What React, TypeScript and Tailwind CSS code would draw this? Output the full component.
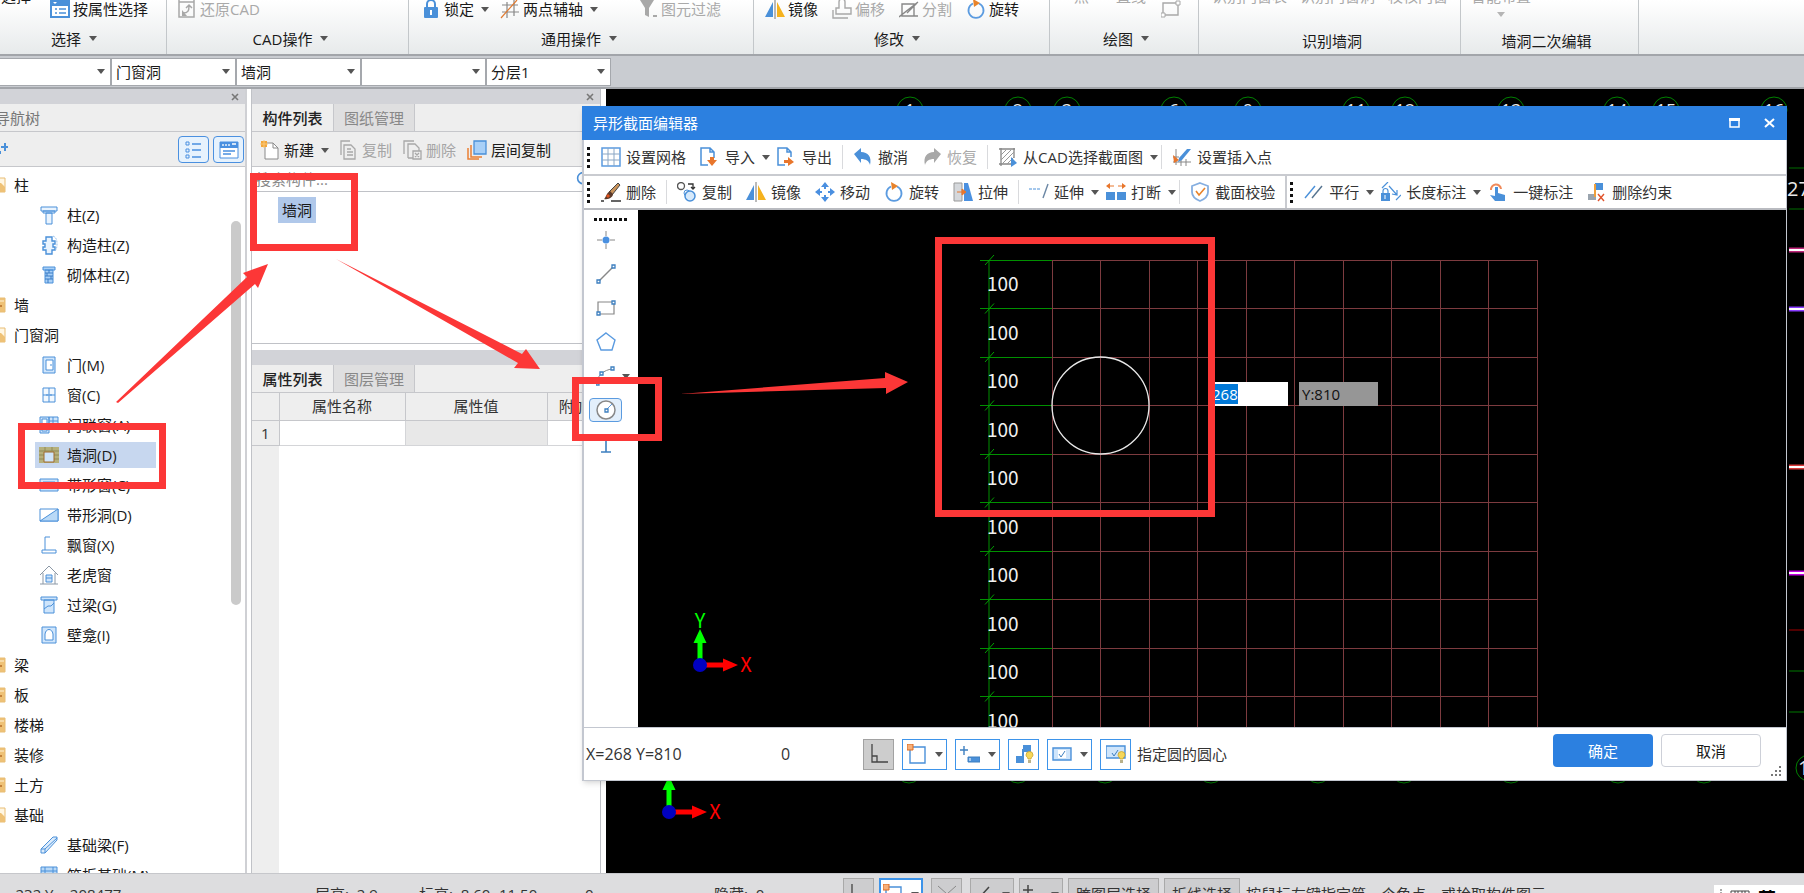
import React, { useEffect, useRef } from "react";
import clsx from "clsx";

const BLUE = "#4a90d9";
const GRAY = "#a8a8a8";

type SvgProps = { children: React.ReactNode; size?: number };

const Svg: React.FC<SvgProps> = ({ children, size = 20 }) => (
  <svg width={size} height={size} viewBox="0 0 20 20" fill="none" className="shrink-0" aria-hidden="true">
    {children}
  </svg>
);

const Caret = ({ className = "text-[#555]" }: { className?: string }) => (
  <svg width="8" height="5" viewBox="0 0 8 5" className={clsx("shrink-0", className)} aria-hidden="true">
    <path d="M0 0h8L4 5z" fill="currentColor" />
  </svg>
);

/* ---------- icons ---------- */

const icons = {
  propSelect: (
    <Svg>
      <path d="M0 1h20v18H0z" fill={BLUE} />
      <path d="M2 7h16v10H2z" fill="#fff" />
      <path d="M3 3h4L5 5z" fill="#fff" />
      <path d="M5 10h2M9 10h7M5 14h2M9 14h7" stroke={BLUE} strokeWidth="1.5" />
    </Svg>
  ),
  restore: (
    <Svg>
      <path d="M2 1v17h15V1M6 14c5 0 6-2 6-7M9 9l3-3 3 3M2 3h15" stroke={GRAY} strokeWidth="1.5" />
      <path d="M5 11v6h5z" fill={GRAY} />
    </Svg>
  ),
  lock: (
    <Svg>
      <path d="M6 8V5a4 4 0 018 0v3" stroke={BLUE} strokeWidth="2" />
      <rect x="3" y="8" width="14" height="11" rx="1" fill={BLUE} />
      <path d="M10 11v5" stroke="#fff" strokeWidth="2" />
    </Svg>
  ),
  axis: (
    <Svg>
      <path d="M7 3v16M14 1v16M2 6h16M2 13h17" stroke="#888" strokeWidth="1.2" />
      <path d="M1 19L17 1" stroke="#e07a30" strokeWidth="1.2" />
    </Svg>
  ),
  filter: (
    <Svg>
      <path d="M2 1h14l-5 8v9l-4-2V9z" fill={GRAY} />
      <path d="M15 17h4" stroke={GRAY} strokeWidth="2" />
    </Svg>
  ),
  mirror: (
    <Svg>
      <path d="M8 3v15H0z" fill={BLUE} />
      <path d="M12 3v15h8z" fill="#f5b21e" />
      <path d="M10 0v20" stroke="#777" />
    </Svg>
  ),
  offset: (
    <Svg>
      <path d="M7 9V3a3 3 0 016 0v6h6v6H4V9zM1 11v8h15" stroke={GRAY} strokeWidth="1.4" />
    </Svg>
  ),
  split: (
    <Svg>
      <path d="M3 5h12v12H3zM0 18L19 3M8 14l10-10M13 17h6" stroke="#888" strokeWidth="1.4" />
    </Svg>
  ),
  rotate: (
    <Svg>
      <path d="M13 4.5a7.500 7.500 0 11-6 0" stroke="#5b9be0" strokeWidth="1.8" />
      <path d="M7 0l7 4-6 4z" fill="#e8832a" />
    </Svg>
  ),
  rectGray: (
    <Svg>
      <path d="M2 4h15v12H2z" stroke={GRAY} strokeWidth="1.4" />
      <path d="M0 14h4v4H0zM15 2h4v4h-4z" fill="#fff" stroke={GRAY} />
    </Svg>
  ),
  newDoc: (
    <Svg>
      <path d="M5 3h8l5 5v11H5z" fill="#fff" stroke="#8a8a8a" />
      <path d="M13 3v5h5" stroke="#8a8a8a" />
      <path d="M1 1h6v6H1z" fill="#f3a73b" />
      <path d="M4 0v8M0 4h8" stroke="#f9c87a" />
    </Svg>
  ),
  copyGray: (
    <Svg>
      <path d="M6 5h7l4 4v10H6z" stroke={GRAY} strokeWidth="1.3" />
      <path d="M3 15V1h9M9 9h4M9 12h6M9 15h6" stroke={GRAY} strokeWidth="1.3" />
    </Svg>
  ),
  deleteGray: (
    <Svg>
      <path d="M2 14V1h10M6 18V4h7l4 4v3M6 18h5" stroke={GRAY} strokeWidth="1.3" />
      <path d="M11 11h8v8h-8zM13 13l4 4M17 13l-4 4" stroke={GRAY} strokeWidth="1.3" />
    </Svg>
  ),
  layerCopy: (
    <Svg>
      <path d="M7 1h12v13H7z" fill="#a9d0f7" stroke={BLUE} strokeWidth="1.3" />
      <path d="M4 5v12h11M1 8v11h11" stroke="#ea8034" strokeWidth="1.5" />
    </Svg>
  ),
  grid: (
    <Svg>
      <path d="M1 1h18v18H1z" stroke="#5b9be0" strokeWidth="1.5" />
      <path d="M7 1v18M13 1v18M1 7h18M1 13h18" stroke="#8aa6c4" />
    </Svg>
  ),
  importDoc: (
    <Svg>
      <path d="M8 18H1V1h9l4 4v6M10 1v4h4" stroke={BLUE} strokeWidth="1.5" />
      <path d="M10 10h4v3h3l-5 6-5-6h3z" fill="#e8762c" />
    </Svg>
  ),
  exportDoc: (
    <Svg>
      <path d="M8 18H1V1h9l4 4v5M10 1v4h4" stroke={BLUE} strokeWidth="1.5" />
      <path d="M7 13h4v-3l6 5-6 4v-3H7z" fill="#e8762c" />
    </Svg>
  ),
  undo: (
    <Svg>
      <path d="M1 7l7-6v4c7 0 11 5 9 13-1-4-4-6-9-6v4z" fill={BLUE} />
    </Svg>
  ),
  redo: (
    <Svg>
      <path d="M19 7l-7-6v4C5 5 1 10 3 18c1-4 4-6 9-6v4z" fill={GRAY} />
    </Svg>
  ),
  cadSelect: (
    <Svg>
      <path d="M1 2h16M1 17h12M3 1v18M16 1v10" stroke="#888" strokeWidth="1.3" />
      <path d="M3 8l5-5M3 13L13 3M4 17L16 5M9 17l7-7" stroke="#999" />
      <path d="M13 10l6 6-6 4z" fill={BLUE} />
    </Svg>
  ),
  insertPoint: (
    <Svg>
      <path d="M4 2v16M1 15h18M9 12v7M14 12v7M1 10h6" stroke="#888" />
      <path d="M19 2l-9 11-4 2 1-4 8-9z" fill={BLUE} />
      <path d="M1 8l6 5-5 3z" fill="#e8762c" />
    </Svg>
  ),
  brush: (
    <Svg>
      <path d="M17 1l2 2-8 10-3-3z" fill="#c8925a" stroke="#444" />
      <path d="M9 9l3 3c0 3-4 6-9 5 2-1 2-6 6-8z" fill="#5b3a2a" />
      <path d="M6 13l2 2" stroke="#e0531f" strokeWidth="3" />
      <path d="M0 19h3M10 19h10" stroke="#333" strokeWidth="1.5" />
    </Svg>
  ),
  copy: (
    <Svg>
      <circle cx="4" cy="4" r="3.500" stroke="#555" strokeWidth="1.3" />
      <path d="M11 2h5v5M14 5l2 2 2-2" stroke="#333" strokeWidth="1.3" />
      <circle cx="10" cy="11" r="3" fill="#fff" stroke={BLUE} />
      <circle cx="13" cy="14" r="5" fill="#d6e9fb" stroke={BLUE} strokeWidth="1.5" />
    </Svg>
  ),
  move: (
    <Svg>
      <path d="M10 0l4 5H6zM10 20l4-5H6zM0 10l5-4v8zM20 10l-5-4v8z" fill="#4a8fe0" />
      <path d="M10 4v3M10 13v3M4 10h3M13 10h3" stroke="#4a8fe0" strokeWidth="2" />
    </Svg>
  ),
  stretch: (
    <Svg>
      <path d="M1 1h8v18H1z" fill="#d5d8dc" stroke="#999" />
      <path d="M11 1h4l5 18h-9z" fill="#4a90e0" />
      <path d="M4 10h6M9 7l4 3-4 3z" stroke="#e8762c" fill="#e8762c" />
    </Svg>
  ),
  extend: (
    <Svg>
      <path d="M0 7h12" stroke={BLUE} strokeDasharray="3 1" />
      <path d="M19 2l-5 14" stroke="#6a86a4" strokeWidth="1.4" />
    </Svg>
  ),
  breakAt: (
    <Svg>
      <path d="M0 10h9v8H0zM11 10h9v8h-9z" fill={BLUE} />
      <path d="M2 4h6M12 4h6" stroke="#e8762c" />
      <path d="M0 4l4-3v6zM20 4l-4-3v6z" fill="#e8762c" />
    </Svg>
  ),
  shield: (
    <Svg>
      <path d="M10 1l8 3v6c0 4-3 7-8 9-5-2-8-5-8-9V4z" stroke="#85aee0" strokeWidth="1.8" />
      <path d="M6 9l3 4 6-7" stroke="#e8832a" strokeWidth="1.6" />
    </Svg>
  ),
  parallel: (
    <Svg>
      <path d="M1 16L11 4" stroke={BLUE} strokeWidth="1.4" />
      <path d="M8 16L18 4" stroke="#55738f" strokeWidth="1.4" />
    </Svg>
  ),
  length: (
    <Svg>
      <path d="M0 11h9v8H0z" fill={BLUE} />
      <path d="M2 11V9a2.500 2.500 0 015 0v2M1 6l6-6M8 4l8 9M15 18l5-5M11 12l5 1V8" stroke={BLUE} strokeWidth="1.2" />
      <path d="M4 13v4" stroke="#fff" />
    </Svg>
  ),
  tap: (
    <Svg>
      <path d="M3 8a5 5 0 1110-1" stroke="#f08a5a" strokeWidth="2" />
      <path d="M7 5h3v6l7 2v6H7l-5-6 5 1z" fill={BLUE} />
    </Svg>
  ),
  unconstrain: (
    <Svg>
      <path d="M8 1h8v7H8z" fill={BLUE} />
      <path d="M1 12h8v6H1z" fill="#9aa4ae" />
      <path d="M8 2v13" stroke="#f0a03c" strokeWidth="2" />
      <path d="M11 12l6 7M17 12l-6 7" stroke="#e0532c" strokeWidth="1.4" />
    </Svg>
  ),
};

const treeIcons = {
  column: (
    <Svg>
      <path d="M2 2h16v4H2zM4 6h12v2H4zM7 8h6v11H7z" fill="#eaf4fe" stroke={BLUE} />
    </Svg>
  ),
  structColumn: (
    <Svg>
      <path d="M7 2h6v4h3v3h-2v3h2v3h-3v4H7v-4H4v-3h2V9H4V6h3z" fill="#eaf4fe" stroke={BLUE} strokeWidth="1.4" />
      <path d="M14 1c3 1 4 4 4 7s0 6-2 8" stroke="#9cc3ec" strokeDasharray="2 1" />
    </Svg>
  ),
  brickColumn: (
    <Svg>
      <path d="M4 2h12v3H4zM6 5h8v13H6z" fill="#a9d0f7" stroke={BLUE} />
      <path d="M6 8h8M6 11h8M6 14h8M10 5v3M8 8v3M12 11v3M9 14v4" stroke="#3a7cc6" />
    </Svg>
  ),
  door: (
    <Svg>
      <path d="M4 2h12v16H4z" fill="#cfe5fb" stroke={BLUE} />
      <path d="M7 5h7v10H7z" fill="#fff" stroke={BLUE} />
      <path d="M12 9v2" stroke={BLUE} />
    </Svg>
  ),
  window: (
    <Svg>
      <path d="M4 3h12v14H4zM10 3v14M4 10h12" fill="#f2f8fe" stroke={BLUE} />
      <path d="M8 9v2M12 9v2" stroke={BLUE} />
    </Svg>
  ),
  doorWindow: (
    <Svg>
      <path d="M1 2h9v16H1zM10 2h9v8h-9zM14 2v8M10 6h9" fill="#cfe5fb" stroke={BLUE} />
      <path d="M3 4h5v12H3z" fill="#fff" stroke={BLUE} />
    </Svg>
  ),
  wallHole: (
    <Svg>
      <path d="M0 2h20v16H0z" fill="#b5b07c" />
      <path d="M0 6h20M0 10h5M15 10h5M0 14h5M15 14h5M6 2v4M13 2v4" stroke="#8f8a58" />
      <path d="M5 7h10v10H5z" fill="#cfe5fb" stroke="#a06a2c" />
    </Svg>
  ),
  stripWindow: (
    <Svg>
      <path d="M1 4h18v12H1z" fill="#cfe5fb" stroke={BLUE} />
      <path d="M4 7h12v6H4z" fill="#fff" stroke={BLUE} />
    </Svg>
  ),
  stripHole: (
    <Svg>
      <path d="M1 4h18v12H1z" fill="#fff" stroke={BLUE} />
      <path d="M1 16L19 4v12z" fill="#b9d9f7" stroke={BLUE} />
    </Svg>
  ),
  bay: (
    <Svg>
      <path d="M11 2H6v13h11v3H3v-3h3" stroke={BLUE} />
    </Svg>
  ),
  dormer: (
    <Svg>
      <path d="M1 10l9-9 9 9M4 8v11M16 8v11M1 19h18" stroke="#8b98a6" />
      <path d="M7 10h6v7H7zM7 13h6" fill="#cfe5fb" stroke={BLUE} />
    </Svg>
  ),
  lintel: (
    <Svg>
      <path d="M2 2h16v3H2zM5 5h10v13H5z" fill="#cfe5fb" stroke={BLUE} />
      <path d="M5 14l4-3h3l3-3" stroke={BLUE} />
    </Svg>
  ),
  niche: (
    <Svg>
      <path d="M3 2h14v16H3z" fill="#cfe5fb" stroke={BLUE} />
      <path d="M6 15V9c1-6 7-6 8 0v6z" fill="#fff" stroke={BLUE} />
    </Svg>
  ),
  beam: (
    <Svg>
      <path d="M2 14L14 2h4v3L6 18H2zM2 14h4v4M6 14L18 3" fill="#dcecfc" stroke={BLUE} />
    </Svg>
  ),
  raft: (
    <Svg>
      <path d="M2 2h16v16H2z" fill="#b9d9f7" stroke={BLUE} />
      <path d="M6 2v16M14 2v16M2 6h16M2 12h16" stroke={BLUE} />
    </Svg>
  ),
};

/* ---------- ribbon ---------- */

type RibbonItemProps = { icon: React.ReactNode; label: string; caret?: boolean; disabled?: boolean };

const RibbonItem: React.FC<RibbonItemProps> = ({ icon, label, caret, disabled }) => (
  <button
    disabled={disabled}
    className={clsx("flex h-6 items-center gap-[3px] whitespace-nowrap", disabled ? "text-[#a9a9a9]" : "text-[#1a1a1a]")}
  >
    {icon}
    <span>{label}</span>
    {caret && <span className="ml-1 flex"><Caret /></span>}
  </button>
);

const BigItem = ({ label, caret, active }: { label: string; caret?: boolean; active?: boolean }) => (
  <button className={clsx("flex h-[35px] flex-col items-center whitespace-nowrap leading-5", active ? "text-[#1a1a1a]" : "text-[#a9a9a9]")}>
    <span>{label}</span>
    {caret && <span className="mt-[6px]"><Caret className="text-[#b5b5b5]" /></span>}
  </button>
);

type RibbonGroupProps = { title: string; caret?: boolean; className: string; children: React.ReactNode };

const RibbonGroup: React.FC<RibbonGroupProps> = ({ title, caret, className, children }) => (
  <div className={clsx("flex shrink-0 flex-col justify-end border-r border-[#c3c7ca]", className)}>
    <div className="flex shrink-0 items-end">{children}</div>
    <div
      className={clsx(
        "flex h-[33px] shrink-0 items-center justify-center gap-2 text-[#1a1a1a]",
        caret ? "pt-[2px]" : "pt-[6px]",
      )}
    >
      {title}
      {caret && <Caret />}
    </div>
  </div>
);

const Ribbon = () => (
  <header className="flex h-[56px] shrink-0 overflow-hidden border-b-2 border-[#a2a5aa] bg-linear-to-b from-white to-[#e7eaeb]">
    <RibbonGroup title="选择" caret className="w-[167px] pr-[18px]">
      <div className="flex items-end gap-[19px] pl-px">
        <BigItem label="选择" active />
        <RibbonItem icon={icons.propSelect} label="按属性选择" />
      </div>
    </RibbonGroup>
    <RibbonGroup title="CAD操作" caret className="w-[242px] pr-1 pl-[10px]">
      <RibbonItem icon={icons.restore} label="还原CAD" disabled />
    </RibbonGroup>
    <RibbonGroup title="通用操作" caret className="w-[345px] pr-4 pl-[12px]">
      <div className="flex gap-[11px]">
        <RibbonItem icon={icons.lock} label="锁定" caret />
        <RibbonItem icon={icons.axis} label="两点辅轴" caret />
        <div className="pl-[29px]">
          <RibbonItem icon={icons.filter} label="图元过滤" disabled />
        </div>
      </div>
    </RibbonGroup>
    <RibbonGroup title="修改" caret className="w-[296px] pr-5 pl-[11px]">
      <div className="flex gap-[14px]">
        <RibbonItem icon={icons.mirror} label="镜像" />
        <RibbonItem icon={icons.offset} label="偏移" disabled />
        <RibbonItem icon={icons.split} label="分割" disabled />
        <RibbonItem icon={icons.rotate} label="旋转" />
      </div>
    </RibbonGroup>
    <RibbonGroup title="绘图" caret className="w-[149px] pr-3 pl-[16px]">
      <div className="flex items-end gap-[15px] pl-2">
        <div className="pr-3"><BigItem label="点" /></div>
        <BigItem label="直线" />
        <RibbonItem icon={icons.rectGray} label="" />
      </div>
    </RibbonGroup>
    <RibbonGroup title="识别墙洞" className="w-[262px] pr-2 pl-[13px]">
      <div className="flex gap-[13px]">
        <BigItem label="识别门窗表" />
        <BigItem label="识别门窗洞" />
        <BigItem label="校核门窗" />
      </div>
    </RibbonGroup>
    <RibbonGroup title="墙洞二次编辑" className="w-[178px] pr-4 pl-[10px]">
      <BigItem label="智能布置" caret />
    </RibbonGroup>
  </header>
);

const filters = [
  { label: "楼层", value: "" },
  { label: "构件分类", value: "门窗洞" },
  { label: "构件类型", value: "墙洞" },
  { label: "构件", value: "" },
  { label: "分层", value: "分层1" },
];

const FilterBar = () => (
  <div className="flex h-[33px] shrink-0 items-center border-b-2 border-[#a2a5aa] bg-[#c9ccd1]">
    <div className="-ml-[14px] flex">
      {filters.map((f) => (
        <label key={f.label} className="relative flex h-[28px] w-[125px] items-center border border-[#a5a8ad] bg-white">
          <select aria-label={f.label} className="h-full w-full appearance-none bg-transparent pl-1 text-[#1a1a1a]">
            <option>{f.value}</option>
          </select>
          <span className="pointer-events-none absolute right-[5px]"><Caret /></span>
        </label>
      ))}
    </div>
  </div>
);

/* ---------- navigation tree ---------- */

type TreeGroup = { name: string; open?: boolean; children?: { name: string; icon: keyof typeof treeIcons }[] };

const tree: TreeGroup[] = [
  {
    name: "柱",
    open: true,
    children: [
      { name: "柱(Z)", icon: "column" },
      { name: "构造柱(Z)", icon: "structColumn" },
      { name: "砌体柱(Z)", icon: "brickColumn" },
    ],
  },
  { name: "墙" },
  {
    name: "门窗洞",
    open: true,
    children: [
      { name: "门(M)", icon: "door" },
      { name: "窗(C)", icon: "window" },
      { name: "门联窗(A)", icon: "doorWindow" },
      { name: "墙洞(D)", icon: "wallHole" },
      { name: "带形窗(C)", icon: "stripWindow" },
      { name: "带形洞(D)", icon: "stripHole" },
      { name: "飘窗(X)", icon: "bay" },
      { name: "老虎窗", icon: "dormer" },
      { name: "过梁(G)", icon: "lintel" },
      { name: "壁龛(I)", icon: "niche" },
    ],
  },
  { name: "梁" },
  { name: "板" },
  { name: "楼梯" },
  { name: "装修" },
  { name: "土方" },
  {
    name: "基础",
    open: true,
    children: [
      { name: "基础梁(F)", icon: "beam" },
      { name: "筏板基础(M)", icon: "raft" },
    ],
  },
];

const Folder = ({ open }: { open?: boolean }) => (
  <svg width="18" height="18" viewBox="0 0 18 18" className="shrink-0" aria-hidden="true">
    <path d="M1 4h6l2-2h8v14H1z" fill={open ? "#fff6e2" : "#eec176"} stroke="#e8bd74" />
    {open ? <path d="M1 16V7h12l4 4v5z" fill="#eec176" /> : <path d="M2 5h14" stroke="#fff3d6" />}
    {!open && <path d="M11 10h3" stroke="#c2803a" strokeWidth="2" />}
  </svg>
);

const PanelBar = ({ closable = true, className }: { closable?: boolean; className?: string }) => (
  <div className={clsx("flex h-[15px] shrink-0 items-center justify-end bg-[#d2d3d8] pr-[6px]", className)}>
    {closable && (
      <button aria-label="关闭" className="flex">
        <svg width="8" height="8" viewBox="0 0 8 8" aria-hidden="true">
          <path d="M1 1l6 6M7 1L1 7" stroke="#777" strokeWidth="1.6" />
        </svg>
      </button>
    )}
  </div>
);

const NavPanel = () => (
  <aside className="flex w-[247px] shrink-0 justify-end overflow-hidden border-r-2 border-[#cfd0d4] bg-white">
    <div className="relative flex w-[265px] shrink-0 flex-col">
      <PanelBar />
      <h2 className="flex h-[28px] shrink-0 items-center border-b border-[#c6c7cb] bg-[#eee] pl-[15px] text-[#777]">导航树</h2>
      <div className="flex h-[35px] shrink-0 items-center gap-1 border-b border-[#c6c7cb] bg-[#eee] pt-px pr-px pl-2">
        <button aria-label="添加" className="mr-auto">
          <Svg>
            <path d="M1 15l8-8M17 3v8M13 7h8" stroke={BLUE} strokeWidth="2" />
            <path d="M10 11h3v3h-3z" fill={BLUE} />
          </Svg>
        </button>
        <button aria-label="列表视图" className="flex h-[27px] w-[31px] items-center justify-center rounded border border-[#4a90e0] bg-[#e6f2fd]">
          <Svg>
            <path d="M2 2h3v3H2zM2 9h3v3H2zM2 15h3v3H2z" stroke="#4a90e0" />
            <path d="M8 4h9M8 10h9M8 17h9" stroke="#4a90e0" strokeWidth="1.4" />
          </Svg>
        </button>
        <button aria-label="分组视图" className="flex h-[27px] w-[31px] items-center justify-center rounded border border-[#4a90e0] bg-[#e6f2fd]">
          <Svg>
            <path d="M1 2h18v16H1z" fill="#fff" stroke="#4a90e0" />
            <path d="M1 2h18v6H1z" fill="#4a90e0" />
            <path d="M4 4v2M7 4v2M10 4v2M13 4h4" stroke="#fff" strokeWidth="1.3" />
            <path d="M4 11h12M4 14h8" stroke="#4a90e0" strokeWidth="1.4" />
          </Svg>
        </button>
      </div>
      <ul className="min-h-0 flex-1 overflow-hidden pt-[3px] text-[#1a1a1a]">
        {tree.map((group) => (
          <li key={group.name}>
            <button className="flex h-[30px] items-center gap-[8px] pl-2">
              <Folder open={group.open} />
              {group.name}
            </button>
            {group.children && (
              <ul>
                {group.children.map((item) => (
                  <li key={item.name} className="flex h-[30px] items-center pl-[55px]">
                    <button
                      className={clsx(
                        "flex h-[26px] w-[121px] items-center gap-[8px] pl-1 whitespace-nowrap",
                        item.name === "墙洞(D)" && "bg-[#c7d7ef]",
                      )}
                    >
                      {treeIcons[item.icon]}
                      {item.name}
                    </button>
                  </li>
                ))}
              </ul>
            )}
          </li>
        ))}
      </ul>
      <div className="absolute top-[132px] right-1 h-[384px] w-[10px] rounded-full bg-[#cacaca]" />
    </div>
  </aside>
);

/* ---------- component and property lists ---------- */

const Tabs = ({ names }: { names: [string, string] }) => (
  <div className="flex h-[28px] shrink-0 border-b border-[#c6c7cb] bg-[#eee]" role="tablist">
    <button role="tab" aria-selected="true" className="w-[81px] font-medium text-[#222]">
      {names[0]}
    </button>
    <button role="tab" aria-selected="false" className="w-[82px] border-x border-[#c6c7cb] bg-[#dfdfe0] text-[#888]">
      {names[1]}
    </button>
  </div>
);

const ListPanel = () => (
  <section className="mr-[5px] ml-[4px] flex w-[350px] shrink-0 flex-col border-x border-[#c0c2c7] bg-white">
    <PanelBar />
    <Tabs names={["构件列表", "图纸管理"]} />
    <div className="flex h-[35px] shrink-0 items-center border-b border-[#c6c7cb] bg-[#eee] pt-[2px] pl-[8px] whitespace-nowrap">
      <button className="mr-[9px] flex items-center gap-[4px] text-[#1a1a1a]">
        {icons.newDoc}
        新建
        <span className="ml-[3px]"><Caret /></span>
      </button>
      <button disabled className="mr-[10px] flex items-center gap-[4px] text-[#a5a5a5]">
        {icons.copyGray}
        复制
      </button>
      <button disabled className="mr-[11px] flex items-center gap-[4px] text-[#a5a5a5]">
        {icons.deleteGray}
        删除
      </button>
      <button className="flex items-center gap-[4px] text-[#1a1a1a]">
        {icons.layerCopy}
        层间复制
      </button>
    </div>
    <div className="flex h-[25px] shrink-0 items-center border-b border-[#c0c2c7] pr-[8px] pl-1">
      <input aria-label="搜索构件" placeholder="搜索构件..." className="min-w-0 flex-1 outline-none placeholder:text-[#888]" />
      <Svg size={16}>
        <circle cx="9" cy="9" r="7" stroke={BLUE} strokeWidth="2" />
        <path d="M14 14l5 5" stroke={BLUE} strokeWidth="2" />
      </Svg>
    </div>
    <ul className="h-[152px] shrink-0 border-b border-[#c0c2c7] pt-[5px] pl-[26px]">
      <li className="flex">
        <button className="h-[26px] w-[38px] bg-[#b0c8ea] text-[#1a1a1a]">墙洞</button>
      </li>
    </ul>
    <PanelBar closable={false} className="mt-[6px]" />
    <Tabs names={["属性列表", "图层管理"]} />
    <table className="w-full table-fixed border-collapse text-center text-[#333]">
      <thead>
        <tr className="h-[27px] bg-[#eee]">
          <th className="w-[27px] border-r border-b border-[#c6c7cb]" />
          <th className="w-[126px] border-r border-b border-[#c6c7cb] p-0 font-normal">属性名称</th>
          <th className="w-[142px] border-r border-b border-[#c6c7cb] p-0 font-normal">属性值</th>
          <th className="border-b border-[#c6c7cb] p-0 font-normal">附加</th>
        </tr>
      </thead>
      <tbody>
        <tr className="h-[25px]">
          <td className="border-r border-b border-[#c6c7cb] bg-[#eee] p-0">1</td>
          <td className="border-r border-b border-[#d4d5d8]" />
          <td className="border-r border-b border-[#d4d5d8] bg-[#e8e8e8]" />
          <td className="border-b border-[#d4d5d8]" />
        </tr>
      </tbody>
    </table>
    <div className="w-[27px] flex-1 bg-[#eee]" />
  </section>
);

/* ---------- drawing area ---------- */

const AxisMark = ({ x, y, showY }: { x: number; y: number; showY?: boolean }) => (
  <g transform={`translate(${x} ${y})`} fontSize="20" fontFamily="Noto Sans CJK SC, sans-serif" textAnchor="middle">
    <path d="M-2.500 0v-22h-4L0-36l6.500 14h-4V0z" fill="#0f0" />
    <path d="M0-2.500h23v-4L38 0 23 6.500v-4H0z" fill="#f00" />
    <circle r="7" fill="#0000c0" />
    {showY && <text x="0" y="-37" fill="#0f0">Y</text>}
    <text x="46" y="7" fill="#f00">X</text>
  </g>
);

const topBubbles: [number, string][] = [
  [304, "1"], [412, "2"], [461, "3"], [568, "6"], [642, "9"], [750, "11"],
  [799, "12"], [905, "13"], [1011, "14"], [1060, "15"], [1168, "16"],
];
const bottomBubbles = [303, 412, 499, 605, 712, 798, 905, 1012, 1098];

const edgeLines = [
  { y: 79, color: "#006c00", width: 1 },
  { y: 120, color: "#006c00", width: 1 },
  { y: 161, color: "#c0267a", width: 5 },
  { y: 220, color: "#8a3cff", width: 5 },
  { y: 378, color: "#d83a3a", width: 5 },
  { y: 484, color: "#c000e0", width: 5 },
  { y: 541, color: "#a00000", width: 1 },
  { y: 582, color: "#007800", width: 1 },
  { y: 623, color: "#007800", width: 1 },
];

const Workspace = () => (
  <div className="min-w-0 flex-1 bg-black">
    <svg className="block h-full w-full" role="img" aria-label="绘图区">
      {topBubbles.map(([x, n]) => (
        <g key={n}>
          <circle cx={x} cy="21" r="13" stroke="#008000" fill="none" />
          <text x={x} y="28" fill="#e8e8e8" fontSize="18" textAnchor="middle">{n}</text>
        </g>
      ))}
      {bottomBubbles.map((x) => (
        <circle key={x} cx={x} cy="681" r="13" stroke="#008000" fill="none" />
      ))}
      {edgeLines.map((l) => (
        <g key={l.y}>
          <path d={`M1183 ${l.y}h40`} stroke={l.color} strokeWidth={l.width} />
          {l.width > 1 && <path d={`M1183 ${l.y}h40`} stroke="#fff" strokeWidth="2" />}
        </g>
      ))}
      <text x="1181" y="107" fill="#e8e8e8" fontSize="20">27</text>
      <circle cx="1203" cy="679" r="13" stroke="#008000" fill="none" />
      <text x="1192" y="686" fill="#e8e8e8" fontSize="20">1</text>
      <AxisMark x={63} y={723} />
    </svg>
  </div>
);

/* ---------- section editor dialog ---------- */

type ToolProps = { icon: React.ReactNode; label: string; caret?: boolean; disabled?: boolean };

const Tool: React.FC<ToolProps> = ({ icon, label, caret, disabled }) => (
  <button
    disabled={disabled}
    className={clsx(
      "flex h-[26px] items-center gap-[5px] pl-[7px] whitespace-nowrap",
      !caret && "pr-[7px]",
      disabled ? "text-[#a9a9a9]" : "text-[#333]",
    )}
  >
    {icon}
    {label}
    {caret && <span className="ml-[2px]"><Caret /></span>}
  </button>
);

const Sep = () => <div className="mx-[3px] h-[24px] w-px shrink-0 bg-[#d9dadd]" />;

const Handle = () => (
  <div className="mr-[4px] ml-[3px] flex shrink-0 flex-col gap-[3px]">
    {[0, 1, 2, 3].map((i) => (
      <span key={i} className="size-[3px] bg-[#111]" />
    ))}
  </div>
);

const PITCH = 48.5;
const LEFT = 414;
const TOP = 50;
const steps = Array.from({ length: 11 }, (_, i) => i);

const SectionCanvas = () => {
  const inputRef = useRef<HTMLInputElement>(null);

  useEffect(() => {
    inputRef.current?.focus();
    inputRef.current?.select();
  }, []);

  return (
    <div className="relative min-w-0 flex-1 overflow-hidden bg-black">
      <svg className="absolute inset-0 h-full w-full" role="img" aria-label="截面网格">
        <g stroke="#7d3b3f" shapeRendering="crispEdges">
          {steps.map((i) => (
            <React.Fragment key={i}>
              <path d={`M${LEFT + i * PITCH} ${TOP}v485`} />
              <path d={`M${LEFT} ${TOP + i * PITCH}h485`} />
            </React.Fragment>
          ))}
        </g>
        <path d="M351 50v500" stroke="#009000" />
        {steps.map((i) => (
          <g key={i} transform={`translate(0 ${TOP + i * PITCH})`}>
            <path d="M342 0h72" stroke="#009000" shapeRendering="crispEdges" />
            <path d="M347 5l9-10" stroke="#00a000" />
            <text x="349" y="31" fill="#f0f0f0" fontSize="19" fontFamily="Noto Sans CJK SC, sans-serif">100</text>
          </g>
        ))}
        <circle cx="462.500" cy="195.500" r="48.500" stroke="#e8e8e8" strokeWidth="1.300" fill="none" />
        <AxisMark x={62} y={455} showY />
      </svg>
      <input
        ref={inputRef}
        aria-label="X"
        defaultValue="268"
        className="absolute top-[172px] left-[572px] h-[24px] w-[78px] bg-white px-[2px] text-[#222] outline-none selection:bg-[#0078d7] selection:text-white"
      />
      <input
        aria-label="Y"
        readOnly
        value="Y:810"
        className="absolute top-[172px] left-[661px] h-[24px] w-[79px] bg-[#969696] px-[3px] text-[#111] outline-none"
      />
    </div>
  );
};

const node = (x: number, y: number) => <path d={`M${x} ${y}h3v3h-3z`} fill="#fff" stroke="#3d7fc0" strokeWidth="1.3" />;

const drawTools = [
  { name: "点", icon: <><path d="M10 1v5M10 14v5M1 10h5M14 10h5" stroke="#888" /><circle cx="10" cy="10" r="3.500" fill="#4a90e0" /></> },
  { name: "直线", icon: <><path d="M2 18L18 2" stroke="#888" strokeWidth="1.4" />{node(1, 16)}{node(16, 1)}</> },
  { name: "矩形", icon: <><path d="M2 4h16v12H2z" stroke="#888" strokeWidth="1.2" />{node(1, 14)}{node(16, 3)}</> },
  { name: "多边形", icon: <path d="M10 1l9 7-3 10H5L1 8z" stroke="#5b9be0" strokeWidth="1.4" /> },
  { name: "弧线", icon: <><path d="M0 17C2 9 8 4 16 3" stroke="#888" />{node(0, 16)}{node(4, 6)}{node(15, 1)}</>, caret: true },
  { name: "圆", icon: <><circle cx="10" cy="10" r="9" fill="#fff" stroke="#888" strokeWidth="1.5" /><path d="M10 10l6-6" stroke="#5b9be0" />{node(9, 9)}</>, active: true },
  { name: "文字", icon: <path d="M10 1v17M5 18h10M5 2h10" stroke="#3d7fc0" strokeWidth="1.6" /> },
];

const SnapButton = ({ label, caret, pressed, children }: { label: string; caret?: boolean; pressed?: boolean; children: React.ReactNode }) => (
  <button
    aria-label={label}
    className={clsx(
      "flex h-[31px] shrink-0 items-center justify-center gap-[8px] border",
      caret ? "w-[45px]" : "w-[31px]",
      pressed ? "border-[#a2a2a2] bg-[#cdcdcd]" : "border-[#3d94ea] bg-white",
    )}
  >
    <Svg>{children}</Svg>
    {caret && <Caret />}
  </button>
);

const bulb = (
  <>
    <path d="M12 11a3.500 3.500 0 117 0c0 2-2 2-2 4h-3c0-2-2-2-2-4z" fill="#f6d75a" stroke="#c9a42c" strokeWidth="0.800" />
    <path d="M14 16h3v3h-3z" fill="#b9b18a" />
  </>
);

const orthoIcon = <path d="M3 0v18h16M3 12h5v6" stroke="#444" strokeWidth="1.3" />;
const boxSnapIcon = (
  <>
    <path d="M3 3h15v16H3z" fill="#fff" stroke={BLUE} strokeWidth="1.4" />
    <path d="M0 0h6v6H0z" fill="#f7b07a" stroke="#dd6b20" />
  </>
);

const SectionEditor = () => (
  <div
    role="dialog"
    aria-label="异形截面编辑器"
    className="absolute top-[106px] right-[17px] bottom-[112px] left-[582px] flex flex-col bg-white shadow-md"
  >
    <div className="flex h-[34px] shrink-0 items-center bg-[#2c80e0] pr-[12px] pl-[11px] text-white">
      <h2 className="mr-auto">异形截面编辑器</h2>
      <button aria-label="最大化" className="mr-[24px]">
        <svg width="11" height="10" viewBox="0 0 11 10" aria-hidden="true">
          <path d="M1 1h9v8H1z" fill="none" stroke="#fff" strokeWidth="1.5" />
          <path d="M0 1.500h11" stroke="#fff" strokeWidth="3" />
        </svg>
      </button>
      <button aria-label="关闭">
        <svg width="11" height="10" viewBox="0 0 11 10" aria-hidden="true">
          <path d="M1 1l9 8M10 1L1 9" stroke="#fff" strokeWidth="2" />
        </svg>
      </button>
    </div>
    <div className="flex min-h-0 flex-1 flex-col border-r border-l-2 border-[#c3c7d0]">
      <div className="flex h-[36px] shrink-0 items-center border-b-2 border-[#c9cbd0]">
        <Handle />
        <Tool icon={icons.grid} label="设置网格" />
        <Tool icon={icons.importDoc} label="导入" caret />
        <Tool icon={icons.exportDoc} label="导出" />
        <Sep />
        <Tool icon={icons.undo} label="撤消" />
        <Tool icon={icons.redo} label="恢复" disabled />
        <Sep />
        <Tool icon={icons.cadSelect} label="从CAD选择截面图" caret />
        <Sep />
        <Tool icon={icons.insertPoint} label="设置插入点" />
      </div>
      <div className="flex h-[34px] shrink-0 items-center border-b-2 border-[#b9bbc0]">
        <Handle />
        <Tool icon={icons.brush} label="删除" />
        <Sep />
        <Tool icon={icons.copy} label="复制" />
        <Tool icon={icons.mirror} label="镜像" />
        <Tool icon={icons.move} label="移动" />
        <Tool icon={icons.rotate} label="旋转" />
        <Tool icon={icons.stretch} label="拉伸" />
        <Sep />
        <Tool icon={icons.extend} label="延伸" caret />
        <Tool icon={icons.breakAt} label="打断" caret />
        <Sep />
        <Tool icon={icons.shield} label="截面校验" />
        <div className="ml-[3px] w-[2px] self-stretch bg-[#c9cbd0]" />
        <Handle />
        <Tool icon={icons.parallel} label="平行" caret />
        <Tool icon={icons.length} label="长度标注" caret />
        <Tool icon={icons.tap} label="一键标注" />
        <Tool icon={icons.unconstrain} label="删除约束" />
      </div>
      <div className="flex min-h-0 flex-1">
        <div className="flex w-[54px] shrink-0 flex-col gap-[7px] pt-2 pl-[5px]">
          <div className="flex gap-[2px] pl-[5px]">
            {steps.slice(0, 7).map((i) => (
              <span key={i} className="size-[3px] bg-[#111]" />
            ))}
          </div>
          <div className="flex flex-col gap-[10px]">
            {drawTools.map((t) => (
              <div key={t.name} className="flex items-center">
                <button
                  aria-label={t.name}
                  className={clsx(
                    "flex h-[24px] w-[33px] items-center justify-center rounded",
                    t.active && "border border-[#5b9be0] bg-[#e3effb]",
                  )}
                >
                  <Svg>{t.icon}</Svg>
                </button>
                {t.caret && <Caret />}
              </div>
            ))}
          </div>
        </div>
        <SectionCanvas />
      </div>
      <div className="flex h-[54px] shrink-0 items-center border-y border-[#c3c7d0] text-[#333]">
        <span className="w-[197px] shrink-0 pl-[2px] text-base">X=268 Y=810</span>
        <span className="w-[82px] shrink-0 text-base">0</span>
        <div className="flex gap-2">
          <SnapButton label="正交" pressed>{orthoIcon}</SnapButton>
          <SnapButton label="对象捕捉" caret>{boxSnapIcon}</SnapButton>
          <SnapButton label="动态输入" caret>
            <path d="M4 2v9M0 6h8" stroke="#3d7fc0" strokeWidth="1.4" />
            <path d="M8 13h12v5H8z" fill={BLUE} stroke="#3d7fc0" />
            <path d="M10 14v3" stroke="#fff" />
          </SnapButton>
          <SnapButton label="显示约束">
            <path d="M9 1h8v7H9zM2 12h8v7H2z" fill={BLUE} />
            <path d="M9 5v10" stroke={BLUE} strokeWidth="2" />
            {bulb}
          </SnapButton>
          <SnapButton label="校核" caret>
            <path d="M1 4h18v12H1z" fill="#cfe5fb" stroke={BLUE} strokeWidth="1.4" />
            <path d="M6 6h8v8H6z" fill="#fff" />
            <path d="M7 10l2 3 4-6" stroke="#3d7fc0" />
          </SnapButton>
          <SnapButton label="校核提示">
            <path d="M0 2h19v12H0z" fill="#cfe5fb" stroke={BLUE} strokeWidth="1.4" />
            <path d="M6 9l2 3 4-6" stroke="#3d7fc0" />
            {bulb}
          </SnapButton>
        </div>
        <span className="pl-[6px] whitespace-nowrap">指定圆的圆心</span>
        <div className="ml-auto flex gap-2 self-start pt-[6px]">
          <button className="h-[33px] w-[100px] rounded bg-[#2c80e0] text-white">确定</button>
          <button className="h-[33px] w-[100px] rounded border border-[#cdd0d8] bg-white text-[#1a1a1a]">取消</button>
        </div>
        <svg width="10" height="10" viewBox="0 0 10 10" className="mr-[5px] mb-1 ml-[10px] shrink-0 self-end" aria-hidden="true">
          <path d="M8 0h2v2H8zM4 4h2v2H4zM8 4h2v2H8zM0 8h2v2H0zM4 8h2v2H4zM8 8h2v2H8z" fill="#777" />
        </svg>
      </div>
    </div>
  </div>
);

/* ---------- status bar ---------- */

const statusButton = "flex h-[32px] shrink-0 items-center justify-center gap-2 border border-[#a9a9a9] bg-[#cdcdcf]";

const StatusBar = () => (
  <footer className="h-[20px] shrink-0 overflow-hidden border-t border-[#c6c7cb] bg-[#dddddf]">
    <div className="flex h-[40px] items-center whitespace-nowrap text-[#333]">
      <span className="w-[315px] shrink-0 pl-[3px]">= 232 Y = 208477</span>
      <span className="w-[104px] shrink-0">层高:&nbsp; 2.9</span>
      <span className="w-[166px] shrink-0">标高:&nbsp; 8.60~11.50</span>
      <span className="w-[129px] shrink-0">0</span>
      <span className="w-[129px] shrink-0">隐藏:&nbsp; 0</span>
      <div className="flex gap-[5px]">
        <button aria-label="正交" className={clsx(statusButton, "w-[31px]")}><Svg>{orthoIcon}</Svg></button>
        <button aria-label="对象捕捉" className="flex h-[32px] w-[44px] items-center justify-center gap-2 border-2 border-[#3d94ea] bg-white">
          <Svg>{boxSnapIcon}</Svg>
          <Caret />
        </button>
        <div className="px-[3px]">
          <button aria-label="交点" className={clsx(statusButton, "w-[31px]")}>
            <Svg><path d="M1 2l18 16M19 2L1 18" stroke="#888" /></Svg>
          </button>
        </div>
        <button aria-label="垂点" className={clsx(statusButton, "w-[44px]")}>
          <Svg><path d="M15 3L5 14M4 9v6h6" stroke="#444" strokeWidth="1.500" /></Svg>
          <Caret />
        </button>
        <button aria-label="动态输入" className={clsx(statusButton, "w-[44px]")}>
          <Svg><path d="M5 1v10M0 6h10" stroke="#444" strokeWidth="1.500" /></Svg>
          <Caret />
        </button>
        <button className={clsx(statusButton, "w-[91px]")}>跨图层选择</button>
        <button className={clsx(statusButton, "w-[76px]")}>折线选择</button>
      </div>
      <span className="pl-[6px]">按鼠标左键指定第一个角点，或拾取构件图元</span>
      <div className="mt-[11px] ml-auto flex h-[30px] w-[90px] shrink-0 gap-2 self-start bg-white pl-[6px] text-lg leading-5 text-black">
        <span className="mt-1 h-5 border-l-2 border-dotted border-[#aaa]" />
        <svg width="20" height="16" viewBox="0 0 20 16" fill="none" className="mt-[5px]" aria-hidden="true">
          <path d="M1 1h18v14H1zM5 1v8M8 1v8M12 1v8M15 1v8" stroke="#444" />
        </svg>
        <span className="mt-1 font-bold">英</span>
        <span className="font-bold">·</span>
      </div>
    </div>
  </footer>
);

/* ---------- tutorial marks drawn over the window ---------- */

const Annotations = () => (
  <svg className="pointer-events-none absolute inset-0 h-full w-full" aria-hidden="true">
    <g fill="none" stroke="#fc3737" strokeWidth="7">
      <rect x="253.500" y="176.500" width="101" height="71" />
      <rect x="21.500" y="426.500" width="141" height="59" />
      <rect x="575.500" y="380.500" width="83" height="57" />
      <rect x="938.500" y="240.500" width="273" height="273" />
    </g>
    <g fill="#fc3737">
      <path d="M116 402L247 277 243 273 268 264 258 288 255 284 118 403z" />
      <path d="M336 259L522 354 526 349 540 369 514 368 518 363z" />
      <path d="M680 394L885 378V372L908 382 886 394V388z" />
    </g>
  </svg>
);

export default function App() {
  return (
    <div className="relative flex h-screen flex-col overflow-hidden bg-white font-['Open_Sans','Noto_Sans_CJK_SC',sans-serif] text-[15px] leading-5">
      <Ribbon />
      <FilterBar />
      <main className="flex min-h-0 flex-1">
        <NavPanel />
        <ListPanel />
        <Workspace />
      </main>
      <StatusBar />
      <SectionEditor />
      <Annotations />
    </div>
  );
}
